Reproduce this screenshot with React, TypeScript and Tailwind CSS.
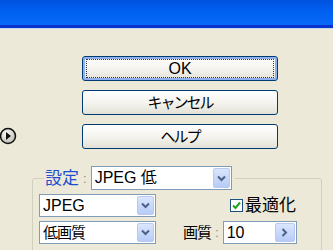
const jp = { fontFamily: '"Liberation Sans", "Noto Sans CJK JP", sans-serif' };

function Chevron() {
  return (
    <svg width="9" height="7" viewBox="0 0 9 7">
      <path d="M1 1.5 L4.5 5 L8 1.5" fill="none" stroke="#4d6185" strokeWidth="2" />
    </svg>
  );
}

function DropButton() {
  return (
    <div className="flex h-full w-[17px] items-center justify-center rounded-[2px] border border-[#b9c9ef] bg-gradient-to-b from-[#dbe6fd] to-[#b6cbf7]">
      <Chevron />
    </div>
  );
}

function Combo({ label, className, size = 'text-[16px]' }: { label: string; className: string; size?: string }) {
  return (
    <div className={`flex items-center border border-[#7f9db9] bg-white p-px ${className}`}>
      <span className={`flex-1 pl-[2px] leading-none text-black ${size}`}>{label}</span>
      <DropButton />
    </div>
  );
}

function XPButton({ label, primary, size }: { label: string; primary?: boolean; size: string }) {
  return (
    <button
      className={`flex h-[25px] w-[196px] items-center justify-center rounded-[3px] border border-[#003c74] bg-gradient-to-b from-white via-[#f5f4ef] to-[#e3e1d6] leading-none text-black ${size} ${
        primary ? 'shadow-[inset_0_0_0_2px_#8fb0ee]' : ''
      }`}
    >
      <span className={primary ? 'flex h-[17px] w-[186px] items-center justify-center outline-1 outline-dotted outline-[#333]' : ''}>
        {label}
      </span>
    </button>
  );
}

export default function App() {
  return (
    <div className="h-[250px] w-[333px] overflow-hidden bg-[#ece9d8]" style={jp}>
      <div className="h-[25px] bg-gradient-to-b from-[#0052e0] via-[#0062f2] to-[#0a68f8]" />
      <div className="h-[3px] bg-[#0833cc]" />
      <div className="h-px bg-[#c8d6ee]" />

      <div className="ml-[82px] flex flex-col gap-[9px] pt-[27px]">
        <XPButton label="OK" primary size="text-[16px]" />
        <XPButton label="キャンセル" size="text-[15px] tracking-[-2px]" />
      </div>

      <div className="mt-[9px] flex items-center">
        <svg width="18" height="18" viewBox="0 0 18 18" className="ml-[-1px] mt-[-2px]">
          <defs>
            <radialGradient id="g" cx="0.4" cy="0.35" r="0.7">
              <stop offset="0" stopColor="#ffffff" />
              <stop offset="1" stopColor="#b8b6aa" />
            </radialGradient>
          </defs>
          <circle cx="9" cy="9" r="7.5" fill="url(#g)" stroke="#111" strokeWidth="1.5" />
          <path d="M7 5 L12 9 L7 13 Z" fill="#111" />
        </svg>
        <div className="ml-[65px]">
          <XPButton label="ヘルプ" size="text-[15px] tracking-[-2px]" />
        </div>
      </div>

      <fieldset className="mt-[17px] ml-[32px] h-[120px] w-[290px] rounded-[3px] border border-[#d0d0bf] px-[6px]">
        <legend className="ml-[5px] flex items-center px-[1px]">
          <span className="text-[17px] leading-none text-[#1f4ed0]">設定</span>
          <span className="mx-[4px] text-[13px] leading-none text-[#888]">:</span>
          <Combo label="JPEG 低" className="h-[24px] w-[141px]" />
          <span className="w-[2px]" />
        </legend>

        <div className="mt-[4px] flex items-center">
          <Combo label="JPEG" className="h-[23px] w-[117px]" />
          <div className="ml-[74px] flex items-center">
            <div className="flex h-[13px] w-[13px] items-center justify-center border border-[#1c5180] bg-white">
              <svg width="9" height="9" viewBox="0 0 9 9">
                <path d="M1 4.5 L3.5 7 L8 1.5" fill="none" stroke="#21a121" strokeWidth="2" />
              </svg>
            </div>
            <span className="ml-[2px] text-[17px] leading-none text-black">最適化</span>
          </div>
        </div>

        <div className="mt-[4px] flex items-center">
          <Combo label="低画質" className="h-[23px] w-[117px]" size="text-[15px] tracking-[-1px]" />
          <span className="ml-[27px] text-[15px] leading-none tracking-[-1px] text-black">画質</span>
          <span className="mx-[4px] text-[13px] leading-none text-[#888]">:</span>
          <div className="flex h-[23px] w-[74px] items-center border border-[#7f9db9] bg-white p-px">
            <span className="flex-1 pl-[2px] text-[16px] leading-none">10</span>
            <div className="flex h-full w-[20px] items-center justify-center rounded-[2px] border border-[#b9c9ef] bg-gradient-to-b from-[#dbe6fd] to-[#b6cbf7]">
              <svg width="7" height="9" viewBox="0 0 7 9">
                <path d="M1.5 1 L5 4.5 L1.5 8" fill="none" stroke="#4d6185" strokeWidth="2" />
              </svg>
            </div>
          </div>
        </div>
      </fieldset>
    </div>
  );
}
